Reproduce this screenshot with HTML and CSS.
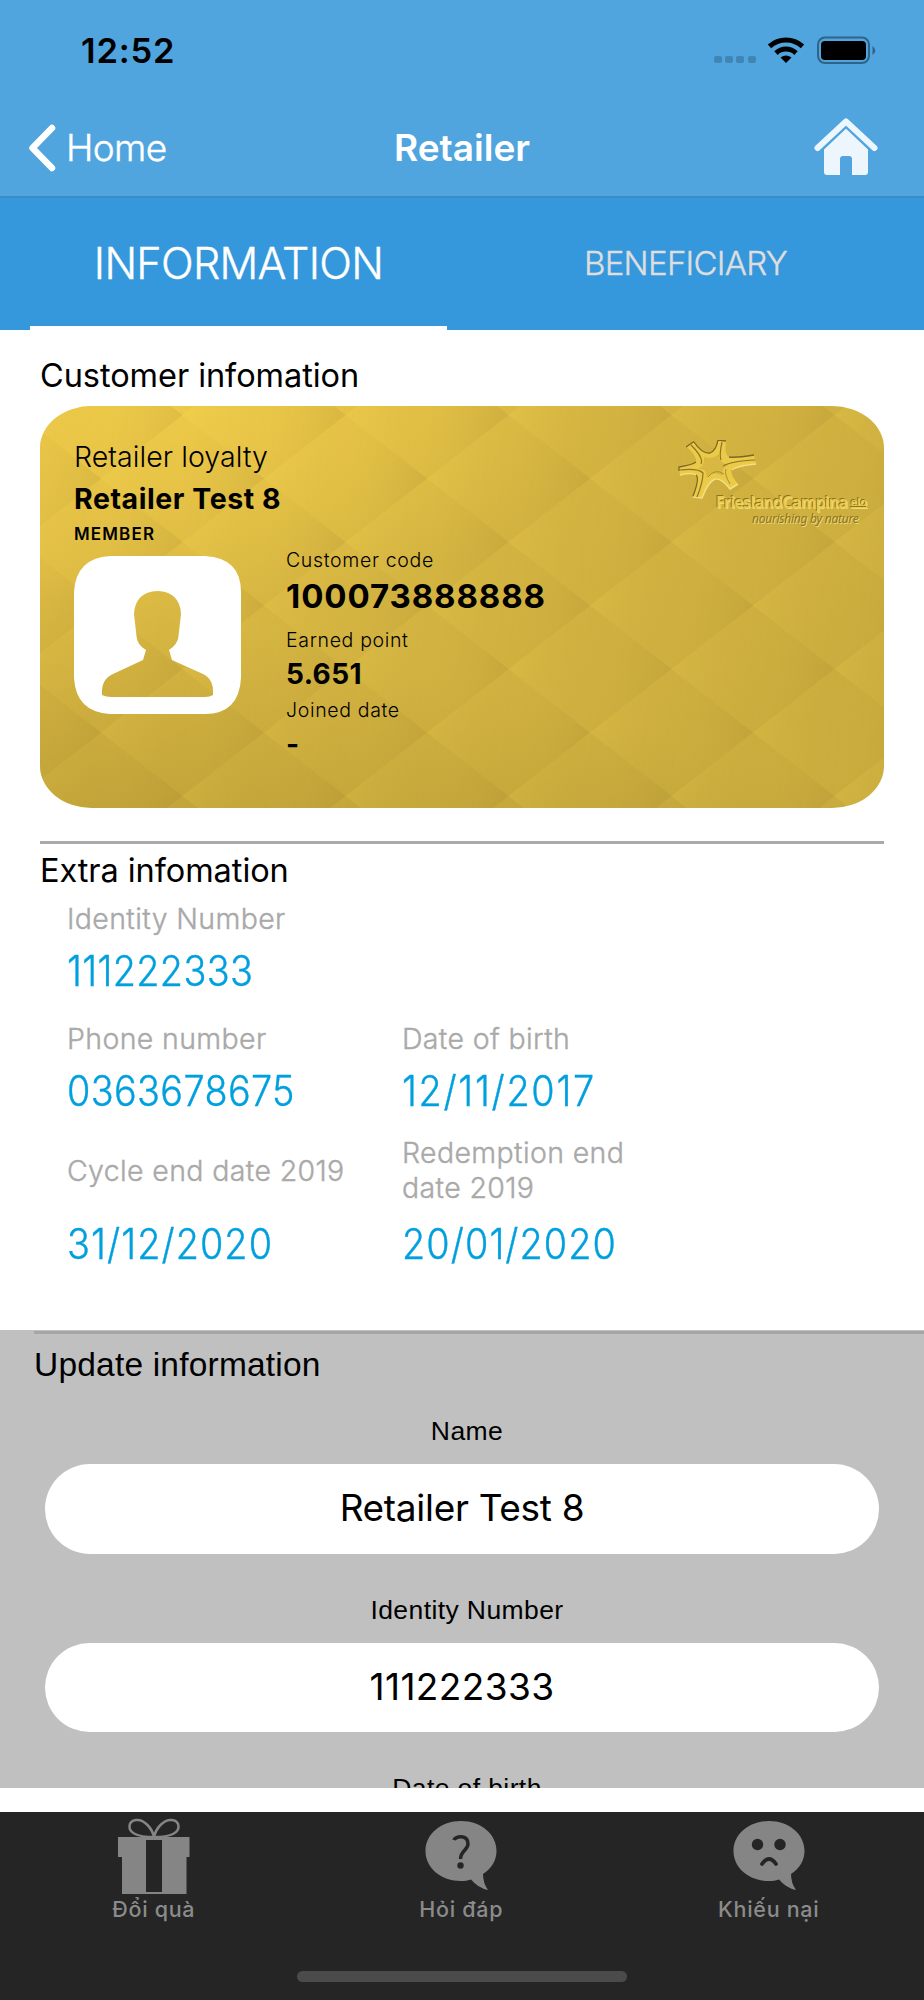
FILE: index.html
```html
<!DOCTYPE html>
<html lang="en">
<head>
  <meta charset="UTF-8">
  <meta name="viewport" content="width=device-width, initial-scale=1.0">
  <title>Retailer</title>
  <link rel="stylesheet" href="styles.css">
</head>
<body>
  <header class="header">
    <div class="status-bar">
      <span class="time">12:52</span>
      <svg width="164" height="30" viewBox="0 0 164 30">
        <g fill="#3f86b5">
          <rect x="0" y="20" width="8" height="7" rx="2"/>
          <rect x="11" y="20" width="8" height="7" rx="2"/>
          <rect x="22" y="20" width="8" height="7" rx="2"/>
          <rect x="34" y="20" width="8" height="7" rx="2"/>
        </g>
        <g fill="none" stroke="#000" stroke-width="5">
          <path d="M55.500 10.300 A24.500 24.500 0 0 1 88.500 10.300"/>
          <path d="M62 17.100 A14.500 14.500 0 0 1 82 17.100"/>
        </g>
        <path d="M66.500 21.500 A9 9 0 0 1 77.500 21.500 L72 27 Z"/>
        <rect x="104" y="1.500" width="51" height="25.500" rx="7" fill="none" stroke="#2f6488" stroke-width="2"/>
        <rect x="107" y="5" width="45" height="19" rx="4"/>
        <path d="M158.500 10 Q164 14.500 158.500 19 Z" fill="#2f6488"/>
      </svg>
    </div>
    <nav class="nav">
      <a class="back">
        <svg width="28" height="48" viewBox="0 0 28 48"><path d="M24 4 L4.500 24 L24 44" fill="none" stroke="#fff" stroke-width="6.500" stroke-linecap="round" stroke-linejoin="round"/></svg>
        <span>Home</span>
      </a>
      <h1>Retailer</h1>
      <svg class="home-icon" width="64" height="60" viewBox="0 0 64 60">
        <path d="M10 28 L32 8.500 L54 28 V54 Q54 57 51 57 H38 V41 Q38 38 35 38 H29 Q26 38 26 41 V57 H13 Q10 57 10 54 Z" fill="#eef6fd"/>
        <path d="M4 31 L32 4.500 L60 31" fill="none" stroke="#50a5df" stroke-width="9" stroke-linejoin="round"/>
        <path d="M3.500 30 L32 3.500 L60.500 30" fill="none" stroke="#eef6fd" stroke-width="6" stroke-linecap="round" stroke-linejoin="round"/>
      </svg>
    </nav>
  </header>

  <div class="tabs">
    <div class="tab active">INFORMATION</div>
    <div class="tab">BENEFICIARY</div>
  </div>

  <main class="content">
    <h2>Customer infomation</h2>
    <section class="card">
      <svg class="card-bg" width="844" height="402" viewBox="0 0 844 402">
        <defs>
          <linearGradient id="gold" x1="0" y1="0" x2="1" y2="0.6">
            <stop offset="0" stop-color="#e3bf45"/>
            <stop offset="0.5" stop-color="#d4b441"/>
            <stop offset="1" stop-color="#caac3e"/>
          </linearGradient>
          <radialGradient id="shine" cx="0.16" cy="0" r="0.5">
            <stop offset="0" stop-color="#f4d04a" stop-opacity="0.7"/>
            <stop offset="1" stop-color="#f4d04a" stop-opacity="0"/>
          </radialGradient>
          <linearGradient id="shade" x1="0.25" y1="0.55" x2="0" y2="1">
            <stop offset="0" stop-color="#a88c2e" stop-opacity="0"/>
            <stop offset="1" stop-color="#a88c2e" stop-opacity="0.45"/>
          </linearGradient>
          <linearGradient id="cell" x1="0" y1="0.46" x2="1" y2="0.54">
            <stop offset="0" stop-color="#ffe25a" stop-opacity="0.16"/>
            <stop offset="0.5" stop-color="#d4b441" stop-opacity="0.02"/>
            <stop offset="1" stop-color="#8e7424" stop-opacity="0.15"/>
          </linearGradient>
          <pattern id="diamonds" x="61" y="9" width="163" height="127" patternUnits="userSpaceOnUse">
            <g fill="url(#cell)">
              <path d="M0 63.500 L81.500 0 L163 63.500 L81.500 127 Z"/>
              <path d="M-81.500 0 L0 -63.500 L81.500 0 L0 63.500 Z"/>
              <path d="M81.500 0 L163 -63.500 L244.500 0 L163 63.500 Z"/>
              <path d="M-81.500 127 L0 63.500 L81.500 127 L0 190.500 Z"/>
              <path d="M81.500 127 L163 63.500 L244.500 127 L163 190.500 Z"/>
            </g>
          </pattern>
        </defs>
        <rect width="844" height="402" fill="url(#gold)"/>
        <rect width="844" height="402" fill="url(#shade)"/>
        <rect width="844" height="402" fill="url(#shine)"/>
        <rect width="844" height="402" fill="url(#diamonds)"/>
      </svg>

      <div class="logo">
        <svg width="80" height="60" viewBox="0 0 80 60">
          <g stroke-linejoin="round">
            <path d="M9 7 L16 2 Q24 14 32 13 Q38 11 40 0 L48 1 Q46 14 51 17 Q58 18 76 15 L78 24 Q58 26 53 30 Q53 36 60 44 L52 49 Q44 38 37 38 Q30 42 24 58 L15 56 Q22 38 18 35 Q14 32 2 35 L1 27 Q14 25 18 22 Q19 16 9 7 Z" fill="#ebca48"/>
            <path d="M26 17 Q34 20 41 14 Q40 22 50 25 Q42 30 45 36 Q34 30 28 38 Q30 28 20 29 Q27 26 26 17 Z" fill="#d8b843"/>
            <path d="M60 44 L52 49 Q44 38 37 39 Q30 42 24 58 L15 57 M2 35 Q14 32 18 35 M78 24 Q58 26 54 30" fill="none" stroke="#f3df84" stroke-width="1.500"/>
            <path d="M8 7 L16 1.500 M16 2 Q24 14 32 13 Q38 11 40 0 L48 1 M51 17 Q58 18 76 15 M1 31 L1 27 Q14 25 18 22 M15 56 Q22 38 18 35" fill="none" stroke="#7d6726" stroke-width="1.300"/>
            <path d="M44 2 Q41 16 43 20 M77 20 Q54 21 45 26 M19 57 Q25 42 25 33 Q20 28 2 30 M13 5 Q26 18 23 24" fill="none" stroke="#8b7328" stroke-width="1.200"/>
            <path d="M46 34 Q37 28 30 37 M52 44 Q46 34 48 29" fill="none" stroke="#a98c30" stroke-width="1"/>
          </g>
        </svg>
        <div class="logo-name">FrieslandCampina <i>elo</i></div>
        <div class="logo-tag">nourishing by nature</div>
      </div>

      <p class="program">Retailer loyalty</p>
      <p class="holder">Retailer Test 8</p>
      <p class="level">MEMBER</p>
      <div class="card-body">
        <svg class="avatar" width="167" height="158" viewBox="0 0 167 158">
          <path fill="#fff" fill-rule="evenodd" d="M36 0 H131 Q167 2 167 36 V122 Q165 158 131 158 H36 Q2 156 0 122 V36 Q2 2 36 0 Z M83.500 35 Q61 36 60 58 L62.500 80 Q63 89 72 94 L69 104 L39 118 Q27 123 28 139 Q32 141 37 141 H131 Q136 141 139 139 Q140 123 129 118 L98 104 L95 94 Q104 88 104.500 80 L107 58 Q106 36 83.500 35 Z"/>
        </svg>
        <div class="card-info">
          <p class="info-label">Customer code</p>
          <p class="code">100073888888</p>
          <p class="info-label earned">Earned point</p>
          <p class="info-value">5.651</p>
          <p class="info-label joined">Joined date</p>
          <p class="info-value empty">-</p>
        </div>
      </div>
    </section>

    <hr>
    <h2 class="extra-title">Extra infomation</h2>
    <div class="extra-grid">
      <div class="item wide">
        <p class="item-label">Identity Number</p>
        <p class="item-value">111222333</p>
      </div>
      <div class="item">
        <p class="item-label">Phone number</p>
        <p class="item-value">0363678675</p>
      </div>
      <div class="item">
        <p class="item-label">Date of birth</p>
        <p class="item-value birth">12/11/2017</p>
      </div>
      <div class="item dates">
        <p class="item-label">Cycle end date 2019</p>
        <p class="item-value">31/12/2020</p>
      </div>
      <div class="item dates">
        <p class="item-label"><span>Redemption end<br>date 2019</span></p>
        <p class="item-value">20/01/2020</p>
      </div>
    </div>
  </main>

  <section class="update">
    <h2>Update information</h2>
    <div class="field">
      <label>Name</label>
      <div class="input">Retailer Test 8</div>
    </div>
    <div class="field">
      <label>Identity Number</label>
      <div class="input number">111222333</div>
    </div>
    <div class="field">
      <label>Date of birth</label>
    </div>
  </section>

  <footer class="tab-bar">
    <a class="tab-item">
      <svg width="80" height="80" viewBox="0 0 80 80">
        <g fill="none" stroke="#858585" stroke-width="2.500">
          <path d="M40 23 C38 14 30 5 22 6 C14 7 13 16 21 20 C27 23 34 23 40 23"/>
          <path d="M40 23 C42 14 50 5 58 6 C66 7 67 16 59 20 C53 23 46 23 40 23"/>
        </g>
        <path d="M4 23 H75.500 V43 H72.500 V80 H8 V43 H4 Z" fill="#858585"/>
        <rect x="32" y="26" width="16" height="52" fill="#252525"/>
      </svg>
      <span>Đổi quà</span>
    </a>
    <a class="tab-item">
      <svg width="80" height="80" viewBox="0 0 80 80">
        <path d="M40 7 C60 7 75.500 20 75.500 37 C75.500 46 71 54 62 60 Q62 69 67 76 Q57 74 50 65.500 C46 66.500 44 67 40 67 C20 67 4.500 54 4.500 37 C4.500 20 20 7 40 7 Z" fill="#858585"/>
        <path d="M33 26 C34 22 47 20 47 30 C47 36 39.500 37 39.500 45" fill="none" stroke="#252525" stroke-width="3.500"/>
        <circle cx="39.500" cy="51.500" r="3.200" fill="#252525"/>
      </svg>
      <span>Hỏi đáp</span>
    </a>
    <a class="tab-item">
      <svg width="80" height="80" viewBox="0 0 80 80">
        <path d="M40 7 C60 7 75.500 20 75.500 37 C75.500 46 71 54 62 60 Q62 69 67 76 Q57 74 50 65.500 C46 66.500 44 67 40 67 C20 67 4.500 54 4.500 37 C4.500 20 20 7 40 7 Z" fill="#858585"/>
        <circle cx="28.500" cy="30.500" r="5.700" fill="#252525"/>
        <circle cx="51" cy="30.500" r="5.700" fill="#252525"/>
        <path d="M33 50 Q40 40 47 50" fill="none" stroke="#252525" stroke-width="3.800" stroke-linecap="round"/>
      </svg>
      <span>Khiếu nại</span>
    </a>
    <div class="home-indicator"></div>
  </footer>
</body>
</html>
```
FILE: styles.css
```css
* {
  box-sizing: border-box;
}
body {
  margin: 0;
  width: 924px;
  height: 2000px;
  overflow: hidden;
  background: #fff;
  color: #000;
  font-family: Inter, 'Liberation Sans', sans-serif;
}
h1, h2, p {
  margin: 0;
  font-weight: 400;
  white-space: nowrap;
}
svg {
  display: block;
}
.header {
  height: 198px;
  background: #50a5df;
  border-bottom: 2px solid #3a8bc6;
}
.status-bar {
  height: 101px;
  padding: 0 46px 0 81px;
  display: flex;
  justify-content: space-between;
  align-items: center;
}
.time {
  font-size: 34.5px;
  font-weight: 600;
  letter-spacing: 0.8px;
}
.nav {
  height: 93px;
  padding: 0 28px;
  display: grid;
  grid-template-columns: 1fr auto 1fr;
  align-items: center;
  color: #fff;
}
.back {
  display: flex;
  align-items: center;
  gap: 10px;
  font-size: 37px;
  font-weight: 300;
  letter-spacing: -0.6px;
  -webkit-text-stroke: 0.4px;
}
.nav h1 {
  font-size: 37px;
  font-weight: 600;
}
.home-icon {
  justify-self: end;
  margin-right: 18px;
}
.tabs {
  height: 132px;
  padding: 0 30px;
  display: flex;
  gap: 30px;
  background: #3597dc;
}
.tab {
  flex: 1;
  display: flex;
  align-items: center;
  justify-content: center;
  padding-bottom: 2px;
  font-size: 33px;
  font-weight: 300;
  letter-spacing: -0.7px;
  color: #dedede;
  -webkit-text-stroke: 0.4px;
}
.tab.active {
  font-size: 43px;
  color: #fff;
  box-shadow: inset 0 -4px #fff;
}
.content {
  height: 1000px;
  padding: 15px 40px 0;
}
h2 {
  font-size: 32.5px;
  line-height: 61px;
  letter-spacing: -0.06px;
}
.card {
  position: relative;
  height: 402px;
  padding: 30px 34px;
  border-radius: 52px / 42px;
  overflow: hidden;
}
.card-bg {
  position: absolute;
  left: 0;
  top: 0;
}
.logo {
  position: absolute;
  left: 638px;
  top: 34px;
  font-family: 'Noto Sans', sans-serif;
  color: #ebcb4c;
  text-shadow: -1px -1px 0 #8b7328, 1px 1px 0 #efd974;
  white-space: nowrap;
}
.logo-name {
  margin: -6px 0 0 38px;
  font-size: 16px;
  font-weight: 600;
  line-height: 16px;
  letter-spacing: -0.58px;
}
.logo-name i {
  font-size: 11px;
  font-style: normal;
  letter-spacing: 0;
  text-decoration: underline;
  vertical-align: 2px;
}
.logo-tag {
  margin-left: 74px;
  font-size: 12px;
  font-style: italic;
  line-height: 18px;
  letter-spacing: -0.25px;
  color: #8c7429;
  text-shadow: 1px 1px 0 #efd974;
}
.card p {
  position: relative;
}
.program {
  font-size: 28.5px;
  font-weight: 300;
  line-height: 42px;
  letter-spacing: 0.06px;
}
.holder {
  font-size: 28.5px;
  font-weight: 700;
  line-height: 41px;
  letter-spacing: 0.56px;
}
.level {
  font-size: 17px;
  font-weight: 600;
  line-height: 30px;
  letter-spacing: 1.15px;
}
.card-body {
  position: relative;
  display: flex;
  gap: 45px;
}
.avatar {
  margin-top: 7px;
}
.info-label {
  font-size: 19.5px;
  font-weight: 300;
  line-height: 22px;
  letter-spacing: 0.66px;
}
.code {
  font-size: 33px;
  font-weight: 700;
  line-height: 50px;
  letter-spacing: 0.9px;
}
.info-label.earned {
  line-height: 38px;
}
.info-label.joined {
  line-height: 42px;
}
.info-value {
  font-size: 28px;
  font-weight: 700;
  line-height: 30px;
  letter-spacing: 0.4px;
}
.info-value.empty {
  line-height: 26px;
}
hr {
  margin: 33px 0 0;
  height: 3px;
  border: none;
  background: #aaa;
}
.extra-title {
  line-height: 54px;
}
.extra-grid {
  display: grid;
  grid-template-columns: 335px 335px;
  padding-left: 27px;
}
.item.wide {
  grid-column: span 2;
  margin-bottom: 15px;
}
.item-label {
  font-size: 28.5px;
  font-weight: 300;
  line-height: 41px;
  letter-spacing: 0.36px;
  color: #a9a9a9;
  -webkit-text-stroke: 0.4px;
}
.item-value {
  font-size: 42px;
  font-weight: 300;
  line-height: 64px;
  letter-spacing: 0.4px;
  color: #00a0df;
  -webkit-text-stroke: 0.4px;
  transform: scaleX(0.9);
  transform-origin: left;
}
.item-value.birth {
  letter-spacing: 1.9px;
}
.dates {
  margin-top: 12px;
}
.dates .item-label {
  display: grid;
  align-items: center;
  height: 70px;
  line-height: 35px;
  margin-bottom: 7px;
}
.dates .item-value {
  letter-spacing: 1.2px;
}
.update {
  height: 458px;
  overflow: hidden;
  background: #c0c0c0;
  font-family: 'Liberation Sans', sans-serif;
}
.update h2 {
  margin: 1px 0 3px 34px;
  border-top: 3px solid #a6a6a6;
  font-size: 33.5px;
  line-height: 62px;
  letter-spacing: 0.2px;
}
.field {
  height: 178.5px;
  padding: 0 45px;
}
.field label {
  display: block;
  padding-left: 10px;
  text-align: center;
  font-size: 26.5px;
  line-height: 65px;
  letter-spacing: 0.4px;
}
.input {
  height: 89.5px;
  border-radius: 45px;
  background: #fff;
  text-align: center;
  font-family: Inter, sans-serif;
  font-size: 37px;
  line-height: 87px;
  letter-spacing: -0.3px;
}
.input.number {
  letter-spacing: 0.4px;
}
.tab-bar {
  position: relative;
  height: 188px;
  margin-top: 24px;
  padding-top: 2px;
  display: grid;
  grid-template-columns: repeat(3, 307.5px);
  background: #252525;
}
.tab-item {
  display: flex;
  flex-direction: column;
  align-items: center;
  font-size: 21.5px;
  font-weight: 500;
  line-height: 30px;
  letter-spacing: 0.7px;
  color: #8b8b8b;
}
.home-indicator {
  position: absolute;
  left: 297px;
  bottom: 18px;
  width: 330px;
  height: 11px;
  border-radius: 6px;
  background: #4b4b4b;
}
```
